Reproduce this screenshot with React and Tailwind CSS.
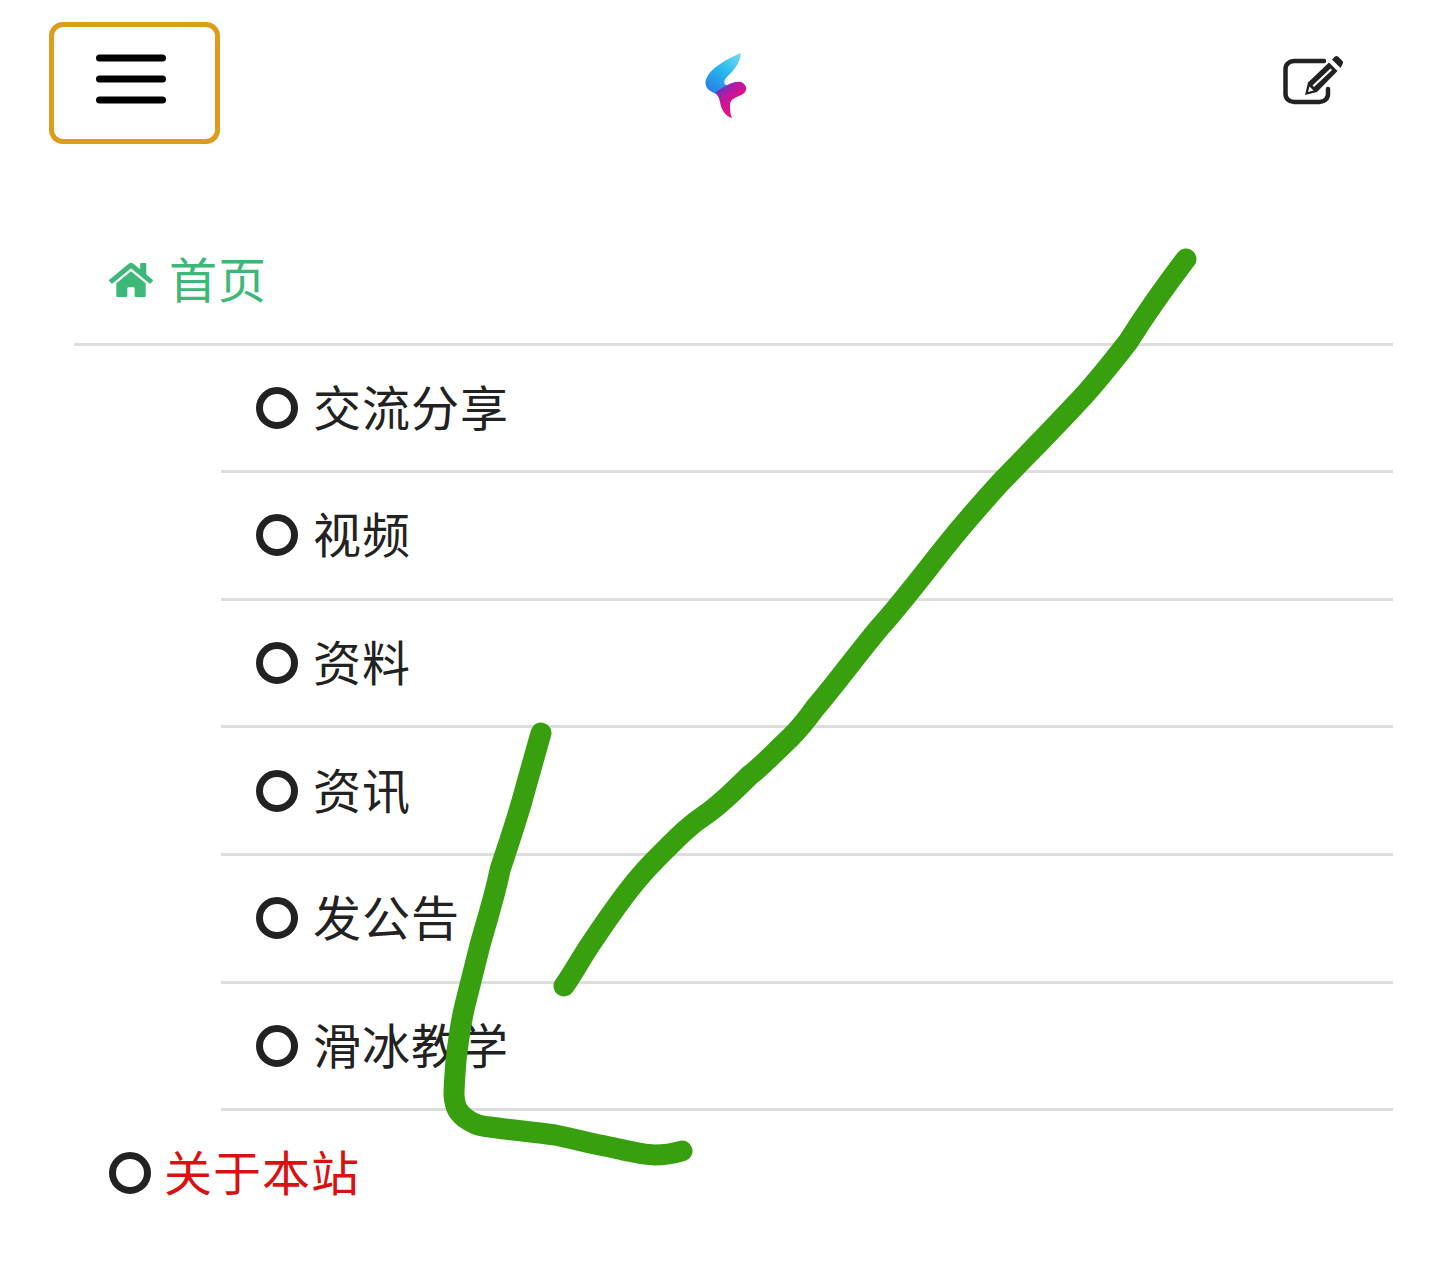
import React from 'react';
import { FaHome } from 'react-icons/fa';

const subItems = ['交流分享', '视频', '资料', '资讯', '发公告', '滑冰教学'];

const Ring = () => (
  <span className="block w-[42px] h-[42px] shrink-0 rounded-full border-[7px] border-[#222222]"></span>
);

const Logo = () => (
  <svg width="70" height="90" viewBox="0 0 70 90" fill="none">
    <defs>
      <linearGradient id="logoBlue" x1="52" y1="13" x2="25" y2="50" gradientUnits="userSpaceOnUse">
        <stop offset="0" stopColor="#7fdcec" />
        <stop offset="0.55" stopColor="#25b8ee" />
        <stop offset="1" stopColor="#2a86e4" />
      </linearGradient>
      <linearGradient id="logoPink" x1="28" y1="48" x2="50" y2="72" gradientUnits="userSpaceOnUse">
        <stop offset="0" stopColor="#5a35c8" />
        <stop offset="0.4" stopColor="#c4169a" />
        <stop offset="1" stopColor="#f0107a" />
      </linearGradient>
    </defs>
    <path d="M52 13C42 17 24 26 18 37C14 45 18 51 28 54L40 46C35 45 34 42 37 38C44 31 51 24 52 13Z" fill="url(#logoBlue)" />
    <path d="M26 53C33 47 45 40 52 42C59 45 59 52 52 55C46 58 42 59 41 64C41 69 41 74 43 78C36 76 32 69 31 62C30 58 29 55 26 53Z" fill="url(#logoPink)" />
  </svg>
);

const EditIcon = () => (
  <svg className="mt-[33px]" width="64" height="60" viewBox="10 10 64 60" fill="none">
    <path d="M54 16H24C19 16 15.5 19.5 15.5 24V49C15.5 53.5 19 57 24 57H49.5C54.5 57 58 53.5 58 49V44" stroke="#222222" strokeWidth="4.5" strokeLinecap="round" />
    <path d="M35 50L38 37.5L59 17.5L67.5 26L47 47Z" fill="#222222" />
    <path d="M62 14.5L65 11.5C66 10.7 67 10.7 68 11.5L72.5 16C73.3 17 73.3 18 72.5 19L70.5 23Z" fill="#222222" />
    <path d="M42.5 40.5L60.5 23.5L62 25L44 42Z" fill="#ffffff" />
    <path d="M38 47L39.5 41.5L43.5 45.5Z" fill="#ffffff" />
  </svg>
);

const App = () => {
  return (
    <div className="relative w-full h-[1274px] bg-white overflow-hidden font-['Noto_Sans_CJK_SC','Noto_Sans',sans-serif] text-[48px] tracking-[1px] text-[#222222]">
      <header className="h-[218px] pt-[22px] pl-[49px] pr-[96px] flex items-start justify-between">
        <button className="w-[171px] h-[122px] flex items-center pl-[42px] pb-[8px] rounded-[14px] border-[5px] border-[#dc9c1c] bg-white">
          <svg width="70" height="50" viewBox="0 0 70 50" stroke="#000000" strokeWidth="7" strokeLinecap="round">
            <path d="M3.5 4H66.5M3.5 25H66.5M3.5 46H66.5" />
          </svg>
        </button>
        <div className="mr-[53px] mt-[18px]">
          <Logo />
        </div>
        <EditIcon />
      </header>

      <ul className="ml-[74px] mr-[47px]">
        <li className="h-[127.6px] flex items-center pl-[35px] gap-[16px] border-b-[3px] border-[#dddddd] text-[#3cb878]">
          <FaHome className="w-[44px] h-[40px]" />
          <span className="pb-[6px]">首页</span>
        </li>
        <li>
          <ul className="ml-[147px]">
            {subItems.map(item => (
              <li key={item} className="h-[127.6px] flex items-center pl-[35px] gap-[15px] border-b-[3px] border-[#dddddd]">
                <Ring />
                <span className="pb-[6px]">{item}</span>
              </li>
            ))}
          </ul>
        </li>
        <li className="h-[124px] flex items-center pl-[35px] gap-[13px] text-[#d81111]">
          <Ring />
          <span className="pb-[7px]">关于本站</span>
        </li>
      </ul>

      {/* hand drawn arrow on top of the screenshot */}
      <svg className="absolute left-0 top-0 pointer-events-none" width="1440" height="1274" viewBox="0 0 1440 1274" fill="none" stroke="#38a00f" strokeWidth="21" strokeLinecap="round" strokeLinejoin="round">
        <path d="M1186 259C1170 280 1145 315 1128 342C1110 365 1090 390 1075 405C1050 432 1025 457 1000 483C980 505 965 522 945 547C925 572 900 605 880 627C855 657 835 685 815 708C805 722 800 728 790 738C775 752 760 768 750 775C735 790 720 805 705 815C690 825 680 835 665 850C650 865 640 875 625 895C610 915 600 930 590 945C580 960 572 975 564 986" />
        <path d="M541 733C535 755 530 772 525 790C517 820 508 845 500 870C495 895 487 920 480 945C475 965 470 985 465 1005C460 1025 458 1045 456 1060C455 1075 454 1085 454 1095C455 1108 458 1112 465 1118C475 1125 480 1126 490 1127C510 1130 535 1132 555 1135C575 1139 592 1144 610 1147C628 1151 642 1155 655 1155C665 1155 675 1153 682 1151" />
      </svg>
    </div>
  );
};

export default App;
